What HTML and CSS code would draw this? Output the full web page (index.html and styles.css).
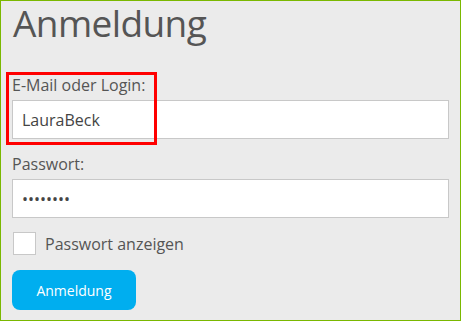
FILE: index.html
```html
<!DOCTYPE html>
<html lang="de">
<head>
    <meta charset="UTF-8">
    <meta name="viewport" content="width=device-width, initial-scale=1.0">
    <title>Anmeldung</title>
    <link rel="stylesheet" href="styles.css">
</head>
<body>

<div class="page">
    <h1>Anmeldung</h1>

    <form class="login-form">
        <div class="field field-marked">
            <label for="login">E-Mail oder Login:</label>
            <input type="text" id="login" value="LauraBeck">
            <span class="highlight"></span>
        </div>

        <div class="field">
            <label for="password">Passwort:</label>
            <input type="password" id="password" value="geheim12">
        </div>

        <label class="check">
            <input type="checkbox" id="show-password">
            <span>Passwort anzeigen</span>
        </label>

        <button type="button" class="submit-btn">Anmeldung</button>
    </form>
</div>

</body>
</html>
```

FILE: styles.css
```css
* {
    margin: 0;
    padding: 0;
    box-sizing: border-box;
}

body {
    font-family: "Open Sans", Arial, sans-serif;
    background-color: #fff;
}

.page {
    width: 461px;
    height: 321px;
    border: 1px solid #7ab800;
    background-color: #ebebeb;
    padding: 0 11px;
    color: #555;
}

h1 {
    font-size: 37px;
    font-weight: 400;
    line-height: 44px;
    letter-spacing: -0.6px;
    color: #555;
    margin-left: 1px;
    margin-bottom: 30px;
}

.login-form {
    display: flex;
    flex-direction: column;
}

.field {
    display: flex;
    flex-direction: column;
    margin-bottom: 15px;
}

.field-marked {
    position: relative;
}

.field label {
    font-size: 16px;
    line-height: 20px;
    margin-bottom: 5px;
}

.field input {
    height: 39px;
    border: 1px solid #c8c8c8;
    background-color: #fff;
    padding: 0 9px;
    font-family: inherit;
    font-size: 16px;
    color: #444;
    outline: none;
}

.highlight {
    position: absolute;
    left: -6px;
    top: -3px;
    width: 151px;
    height: 73px;
    border: 3px solid #ff0000;
    pointer-events: none;
}

.check {
    display: flex;
    align-items: center;
    gap: 9px;
    font-size: 16px;
    margin-top: -1px;
    margin-bottom: 15px;
}

.check input {
    appearance: none;
    width: 23px;
    height: 23px;
    margin-left: 1px;
    border: 1px solid #c8c8c8;
    background-color: #fff;
}

.submit-btn {
    width: 124px;
    height: 40px;
    border: none;
    border-radius: 8px;
    background-color: #00aeef;
    color: #fff;
    font-family: inherit;
    font-size: 14px;
    cursor: pointer;
}
```
